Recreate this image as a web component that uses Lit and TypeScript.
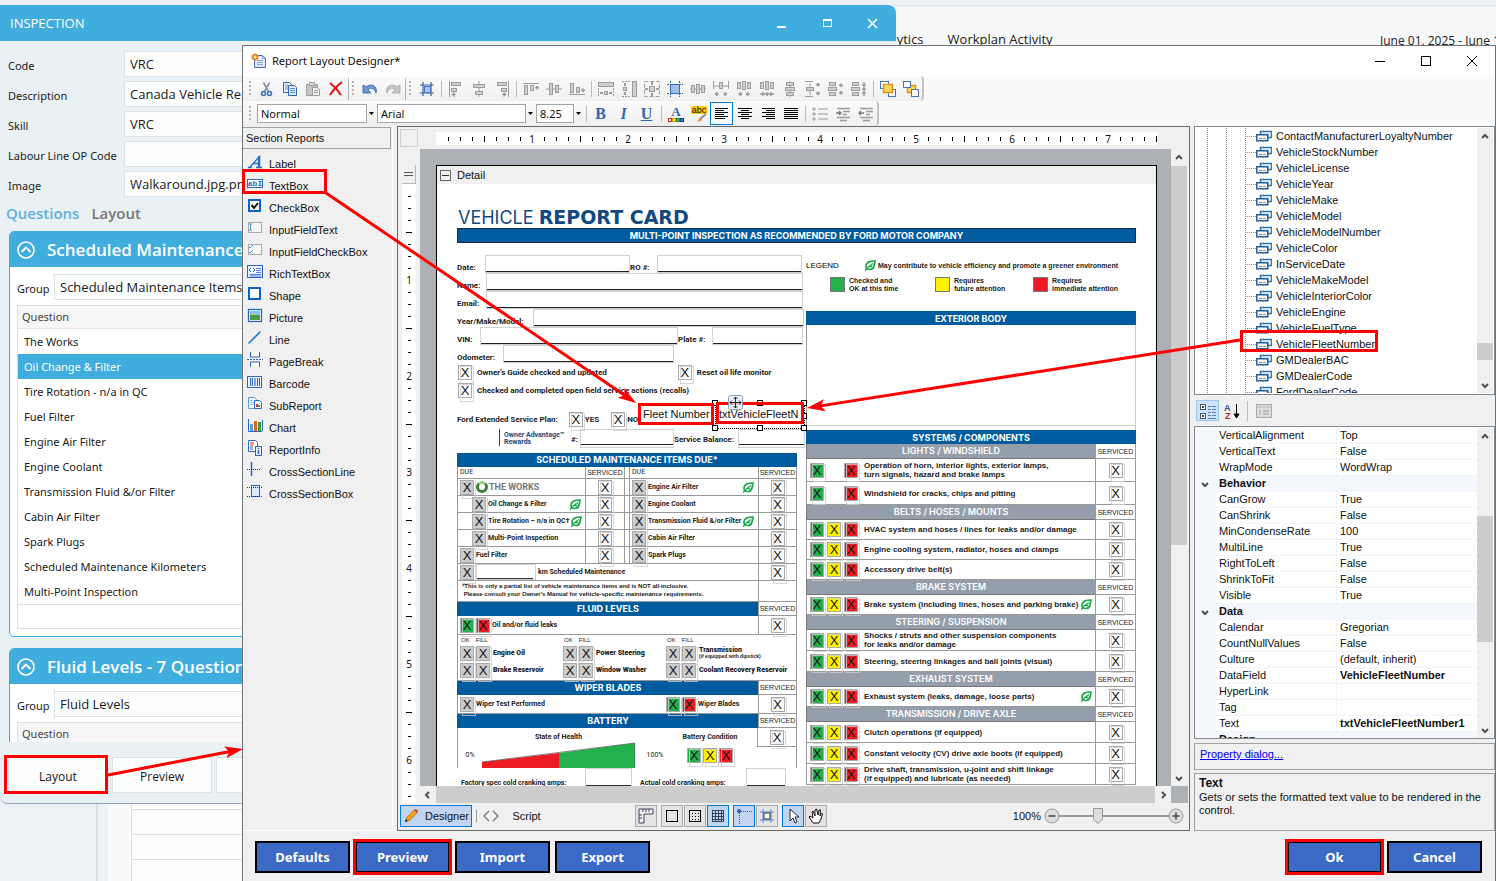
import { LitElement, html, svg, css, nothing } from "lit";
import { customElement } from "lit/decorators.js";

type Tpl = unknown;

const icon = (body: Tpl, w = 16, h = 16) =>
  html`<svg width=${w} height=${h} viewBox="0 0 ${w} ${h}" aria-hidden="true">${body}</svg>`;

/* ---------- toolbar glyphs ---------- */
const G = "#cfcfcf";
const S = "#9c9c9c";
const arrowH = (x: number, y: number, d: number) =>
  svg`<path d="M${x} ${y}h${4 * d}M${x + 4 * d} ${y}l${-2 * d} -2v4z" fill=${S} stroke=${S}/>`;
const arrowV = (x: number, y: number, d: number) =>
  svg`<path d="M${x} ${y}v${4 * d}M${x} ${y + 4 * d}l-2 ${-2 * d}h4z" fill=${S} stroke=${S}/>`;
const box = (x: number, y: number, w: number, h: number) =>
  svg`<rect x=${x + 0.5} y=${y + 0.5} width=${w - 1} height=${h - 1} fill=${G} stroke=${S}/>`;

const TB = {
  cut: svg`<path d="M4.500 1.500l5 9M10.500 1.500l-5 9" stroke="#8792a8" stroke-width="1.600" fill="none"/><circle cx="4.500" cy="12.500" r="2" fill="none" stroke="#3a6bc0" stroke-width="1.500"/><circle cx="10.500" cy="12.500" r="2" fill="none" stroke="#3a6bc0" stroke-width="1.500"/>`,
  copy: svg`<path d="M1.500 1.500h6l2 2v8h-8z" fill="#eef4ff" stroke="#2f62b5"/><path d="M6.500 4.500h6l2 2v8h-8z" fill="#e4eeff" stroke="#2f62b5"/><path d="M3 4h3M3 6h3M3 8h3M8 7.500h5M8 9.500h5M8 11.500h5" stroke="#5b8bd8"/>`,
  paste: svg`<path d="M1.500 3.500h11v11h-11z" fill="#c4c4c4" stroke=${S}/><path d="M4.500 1.500h5v3h-5z" fill="#ddd" stroke=${S}/><path d="M7.500 6.500h5l2 2v6h-7z" fill="#f2f2f2" stroke=${S}/><path d="M9 9.500h4M9 11.500h4" stroke=${S}/>`,
  del: svg`<path d="M2 2c4 3 8 7 11 12M14 1C9 5 5 9 2 14" stroke="#e60f0f" stroke-width="2" fill="none"/>`,
  undo: svg`<path d="M1 4v8h8l-3-3c3-3 6-2 8 3 2-6-4-11-10-6z" fill="#6e9ad6" stroke="#2f5fa8" stroke-width="0.800"/>`,
  redo: svg`<path d="M15 4v8H7l3-3c-3-3-6-2-8 3-2-6 4-11 10-6z" fill="#c4c4c4" stroke="#a4a4a4" stroke-width="0.800"/>`,
  snap: svg`<path d="M4 1v14M12 1v14M1 4h14M1 12h14" stroke="#35609f" stroke-width="1.200"/><rect x="5.500" y="5.500" width="6" height="6" fill="#a9c6f2" stroke="#4777be"/>`,
  left: svg`<path d="M1.500 0v16" stroke=${S}/>${box(3, 1, 10, 4)}${box(3, 7, 6, 4)}${arrowH(8, 13.5, -1)}`,
  center: svg`<path d="M8 0v16" stroke=${S}/>${box(2, 3, 12, 4)}${box(4, 10, 8, 4)}`,
  right: svg`<path d="M14.500 0v16" stroke=${S}/>${box(3, 1, 10, 4)}${box(7, 7, 6, 4)}${arrowH(8, 13.5, 1)}`,
  top: svg`<path d="M0 2.500h16" stroke=${S}/>${box(1, 4, 4, 10)}${box(7, 4, 4, 6)}${arrowV(14, 9, -1)}`,
  middle: svg`<path d="M0 8h16" stroke=${S}/>${box(3, 2, 4, 12)}${box(9, 4, 4, 8)}`,
  bottom: svg`<path d="M0 13.500h16" stroke=${S}/>${box(1, 2, 4, 10)}${box(7, 6, 4, 6)}${arrowV(14, 7, 1)}`,
  width: svg`${box(0, 1, 16, 5)}<path d="M.5 7v8M15.500 7v8" stroke=${S} stroke-dasharray="2 1"/>${box(6, 10, 4, 4)}<path d="M5 12H2M11 12h3" stroke=${S} stroke-width="2"/>`,
  height: svg`${box(11, 0, 5, 16)}<path d="M1 .5h8M1 15.500h8" stroke=${S} stroke-dasharray="2 1"/>${box(2, 6, 4, 4)}<path d="M4 5V2M4 11v3" stroke=${S} stroke-width="2"/>`,
  both: svg`<rect x=".5" y=".5" width="15" height="15" fill="none" stroke=${S} stroke-dasharray="4 2"/>${box(5, 5, 6, 6)}<path d="M8 1v3M8 12v3M1 8h3M12 8h3" stroke=${S} stroke-width="2"/>`,
  sizeGrid: svg`<path d="M3.500 0v16M12.500 0v16M0 3.500h16M0 12.500h16" stroke="#2f5f9f" stroke-dasharray="2 1"/><rect x="3.500" y="3.500" width="9" height="9" fill="#9fc0ef" stroke="#3a6cb4"/>`,
  h1: svg`<path d="M0 8h16" stroke=${S}/>${box(1, 4, 4, 8)}${box(6, 3, 4, 10)}${box(11, 4, 4, 8)}`,
  h2: svg`<path d="M.5 0v8M15.500 0v8M5 5h6" stroke=${S}/>${box(6, 1, 4, 7)}<path d="M1 5h4M11 5h4" stroke=${S}/>${arrowH(6, 13, -1)}${arrowH(10, 13, 1)}`,
  h3: svg`${box(1, 1, 4, 7)}${box(6, 0, 4, 9)}${box(11, 1, 4, 7)}${arrowH(2, 13, 1)}${arrowH(14, 13, -1)}`,
  h4: svg`${box(1, 1, 4, 7)}${box(6, 0, 4, 9)}${box(11, 1, 4, 7)}<path d="M1 13h14M4 11v4M8 11v4M12 11v4" stroke=${S} stroke-width="1.500"/>`,
  v1: svg`<path d="M8 0v16" stroke=${S}/>${box(4, 1, 8, 4)}${box(3, 6, 10, 4)}${box(4, 11, 8, 4)}`,
  v2: svg`<path d="M0 .5h8M0 15.500h8M5 2v12" stroke=${S}/>${box(1, 6, 8, 4)}${arrowV(13, 6, -1)}${arrowV(13, 10, 1)}`,
  v3: svg`${box(1, 1, 7, 4)}${box(0, 6, 9, 4)}${box(1, 11, 7, 4)}${arrowV(13, 2, 1)}${arrowV(13, 14, -1)}`,
  v4: svg`${box(1, 1, 7, 4)}${box(0, 6, 9, 4)}${box(1, 11, 7, 4)}<path d="M13 1v14M11 4h4M11 8h4M11 12h4" stroke=${S} stroke-width="1.500"/>`,
  front: svg`<rect x=".5" y=".5" width="8" height="7" fill="#fff" stroke="#4a72b8"/><rect x="8.500" y="8.500" width="7" height="7" fill="#fff" stroke="#4a72b8"/><rect x="3.500" y="3.500" width="9" height="8" fill="#ffd85a" stroke="#e38b12" stroke-width="1.400"/>`,
  back: svg`<rect x="4.500" y="4.500" width="8" height="7" fill="#ffd85a" stroke="#e38b12" stroke-width="1.400"/><rect x=".5" y=".5" width="7" height="6" fill="#fff" stroke="#4a72b8"/><rect x="8.500" y="8.500" width="7" height="7" fill="#fff" stroke="#4a72b8"/>`,
  fore: svg`<text x="8" y="10" text-anchor="middle" font-family="Liberation Serif" font-size="13" font-weight="700" fill="#2f64b4">A</text><rect x=".5" y="12.500" width="3" height="3" fill="#fff" stroke="#d22"/><rect x="4.500" y="12.500" width="3" height="3" fill="#ffe04a" stroke="#d90"/><rect x="8.500" y="12.500" width="3" height="3" fill="#4c4" stroke="#181"/><rect x="12.500" y="12.500" width="3" height="3" fill="#58f" stroke="#139"/>`,
  mark: svg`<rect width="16" height="8" rx="1" fill="#ffc60a"/><text x="8" y="7" text-anchor="middle" font-family="Liberation Sans" font-size="9" fill="#111">abc</text><path d="M15 8l-6 5" stroke="#8a8f98" stroke-width="2"/><path d="M9 12l-3 4 5-2z" fill="#f27a1a"/>`,
  bullets: svg`<path d="M6 3h10M6 8h10M6 13h10" stroke=${S}/><path d="M1 2h2v2H1zM1 7h2v2H1zM1 12h2v2H1z" fill="none" stroke=${S}/>`,
  indent: svg`<path d="M2 2.500h13M8 5.500h7M8 8.500h4M2 11.500h13M5 14.500h7" stroke=${S} stroke-width="1.500"/><path d="M1 7h5M4 5l2 2-2 2" stroke="#777" fill="none" stroke-width="1.300"/>`,
  outdent: svg`<path d="M2 2.500h13M8 5.500h7M8 8.500h4M2 11.500h13M5 14.500h7" stroke=${S} stroke-width="1.500"/><path d="M6 7H1M3 5L1 7l2 2" stroke="#777" fill="none" stroke-width="1.300"/>`,
};
const lines = (w: number[], mode: "l" | "c" | "r") =>
  icon(w.map((n, i) => {
    const x = mode === "l" ? 1 : mode === "c" ? 8 - n / 2 : 15 - n;
    return svg`<rect x=${x} y=${2 + i * 2} width=${n} height="1" fill="#000"/>`;
  }));

/* ---------- toolbox glyphs ---------- */
const B = "#2a67c4";
const TOOLS: [string, Tpl][] = [
  ["Label", svg`<path d="M1 13.500h4M9 13.500h6M3 13L12.500 2.500V13M6 9.500h6" stroke="#2b6fc2" stroke-width="1.400" fill="none"/><path d="M12 2v11" stroke="#2b6fc2" stroke-width="2.200"/>`],
  ["TextBox", svg`<rect x=".5" y="3.500" width="15" height="8" fill="#fff" stroke=${B}/><text x="8" y="10" text-anchor="middle" font-family="Liberation Mono" font-size="8" font-weight="700" fill=${B}>abI</text>`],
  ["CheckBox", svg`<rect x="2" y="2" width="11" height="11" fill="#fff" stroke="#0a63c9" stroke-width="2"/><path d="M4.500 7l2.500 3 4-5" stroke="#111" stroke-width="2" fill="none"/>`],
  ["InputFieldText", svg`<rect x="1.500" y="2.500" width="13" height="10" fill="#f6f6f6" stroke="#aaa"/><path d="M3.500 4v6M2 4h3M2 10h3" stroke="#3aa0d8"/>`],
  ["InputFieldCheckBox", svg`<rect x="1.500" y="2.500" width="13" height="10" fill="#f6f6f6" stroke="#aaa"/><path d="M2 5l1 1 3-3M2 10l1 1 3-3" stroke="#3aa0d8" fill="none"/>`],
  ["RichTextBox", svg`<rect x=".5" y="1.500" width="15" height="12" fill="#eaf2ff" stroke=${B}/><path d="M4 4L2 6l2 2M6 4l2 2-2 2" stroke=${B} fill="none"/><path d="M9 4.500h5M9 6.500h5M9 8.500h5M3 10.500h11M3 12h11" stroke=${B} stroke-width=".8"/>`],
  ["Shape", svg`<rect x="2" y="2" width="11" height="11" fill="#fff" stroke="#0a63c9" stroke-width="2"/>`],
  ["Picture", svg`<rect x="1.500" y="1.500" width="13" height="12" fill="#fff" stroke=${B} stroke-width="1.300"/><path d="M3 3h10v4H3z" fill="#7ec4f5"/><path d="M3 7h10v5H3z" fill="#4f9a4a"/><path d="M4 7l3-2 2 2z" fill="#f2c640"/>`],
  ["Line", svg`<path d="M1.500 13.500l12-12" stroke="#1c7dc9" stroke-width="1.600"/>`],
  ["PageBreak", svg`<path d="M3.500 0v5h9V0" fill="#fff" stroke=${B}/><path d="M3.500 15v-5h9v5" fill="#fff" stroke=${B}/><path d="M0 7.500h16" stroke=${B} stroke-dasharray="2 1"/>`],
  ["Barcode", svg`<rect x=".5" y="2.500" width="14" height="11" fill="#fff" stroke=${B}/><path d="M3.500 4v8M5.500 4v8M8 4v8M10.500 4v8M12.500 4v8" stroke=${B} stroke-width="1.200"/>`],
  ["SubReport", svg`<path d="M1.500 1.500h6l2 2v9h-8z" fill="#fff" stroke="#5a9bd8"/><path d="M3 4.500h3M3 6.500h5M3 8.500h5" stroke="#8cc"/><path d="M7.500 4.500h5l2 2v6h-7z" fill="#fff" stroke=${B}/><path d="M9 8h2v3H9z" fill="#d33"/><path d="M11 9h2v2h-2z" fill="#3a3"/>`],
  ["Chart", svg`<path d="M1.500 1v12.500H15M15.500 2v11" fill="none" stroke=${B}/><path d="M3 6h3v7H3z" fill="#5ac"/><path d="M7 3h3v10H7z" fill="#e0661c"/><path d="M11 4h3v9h-3z" fill="#3a9a3a"/>`],
  ["ReportInfo", svg`<path d="M1.500 .5h7l2 2v9h-9z" fill="#fff" stroke=${B}/><path d="M3 3h4M3 5h3" stroke="#d33"/><path d="M3 7h3M3 9h3" stroke=${B}/><rect x="8.500" y="6.500" width="6" height="9" fill="#eef4ff" stroke=${B}/><path d="M11.500 8v1M11.500 10v4" stroke=${B} stroke-width="1.500"/>`],
  ["CrossSectionLine", svg`<path d="M4.500 0v14" stroke=${B} stroke-width="1.500"/><path d="M0 7.500h14" stroke="#333" stroke-dasharray="1 1"/>`],
  ["CrossSectionBox", svg`<rect x="4.500" y="1.500" width="8" height="11" fill="#dbe9fb" stroke=${B}/><path d="M0 3.500h16M0 12.500h16" stroke="#333" stroke-dasharray="1 1"/>`],
];

const leaf = html`<svg class="leaf" width="11" height="11" viewBox="0 0 11 11" aria-hidden="true"><path d="M10 1C5 1 1 2 1 6.500 1 9 3 9.500 5 9.500 9 9.500 9.500 5 10 1z" fill="#fff" stroke="#1fa84f" stroke-width="1.700"/><path d="M0 11C2 8 5 5 8 3.500M4 6.500h3" stroke="#1fa84f" stroke-width="1.300" fill="none"/></svg>`;

const chev = (d: "up" | "down" | "left" | "right") => {
  const p = { up: "M2 6l3-3 3 3", down: "M2 4l3 3 3-3", left: "M6 2L3 5l3 3", right: "M4 2l3 3-3 3" }[d];
  return icon(svg`<path d=${p} fill="none" stroke="#505050" stroke-width="2"/>`, 10, 10);
};

const scrollbar = (dir: "v" | "h", before: number, thumb: number, after: number) => html`
  <div class="sb ${dir}">
    <span class="sb-arrow">${chev(dir === "v" ? "up" : "left")}</span>
    <span style="flex:${before}"></span>
    <span class="thumb" style="flex:${thumb}"></span>
    <span style="flex:${after}"></span>
    <span class="sb-arrow">${chev(dir === "v" ? "down" : "right")}</span>
  </div>`;

const X = (kind = "") => html`<span class="x ${kind}">X</span>`;

const QUESTIONS = ["The Works", "Oil Change & Filter", "Tire Rotation - n/a in QC", "Fuel Filter", "Engine Air Filter", "Engine Coolant", "Transmission Fluid &/or Filter", "Cabin Air Filter", "Spark Plugs", "Scheduled Maintenance Kilometers", "Multi-Point Inspection"];

const TREE = ["ContactManufacturerLoyaltyNumber", "VehicleStockNumber", "VehicleLicense", "VehicleYear", "VehicleMake", "VehicleModel", "VehicleModelNumber", "VehicleColor", "InServiceDate", "VehicleMakeModel", "VehicleInteriorColor", "VehicleEngine", "VehicleFuelType", "VehicleFleetNumber", "GMDealerBAC", "GMDealerCode", "FordDealerCode"];

const PROPS: [string, string?, boolean?][] = [
  ["VerticalAlignment", "Top"], ["VerticalText", "False"], ["WrapMode", "WordWrap"],
  ["Behavior"],
  ["CanGrow", "True"], ["CanShrink", "False"], ["MinCondenseRate", "100"], ["MultiLine", "True"], ["RightToLeft", "False"], ["ShrinkToFit", "False"], ["Visible", "True"],
  ["Data"],
  ["Calendar", "Gregorian"], ["CountNullValues", "False"], ["Culture", "(default, inherit)"], ["DataField", "VehicleFleetNumber", true], ["HyperLink", ""], ["Tag", ""], ["Text", "txtVehicleFleetNumber1", true],
  ["Design"],
];

interface SysRow { text: string; two?: string; noYellow?: boolean; leaf?: boolean; }
const SYSTEMS: { name: string; size: string; rows: SysRow[] }[] = [
  { name: "LIGHTS / WINDSHIELD", size: "tall", rows: [
    { text: "Operation of horn, interior lights, exterior lamps,", two: "turn signals, hazard and brake lamps", noYellow: true },
    { text: "Windshield for cracks, chips and pitting", noYellow: true }] },
  { name: "BELTS / HOSES / MOUNTS", size: "low", rows: [
    { text: "HVAC system and hoses / lines for leaks and/or damage" },
    { text: "Engine cooling system, radiator, hoses and clamps" },
    { text: "Accessory drive belt(s)" }] },
  { name: "BRAKE SYSTEM", size: "low", rows: [{ text: "Brake system (including lines, hoses and parking brake)", leaf: true }] },
  { name: "STEERING / SUSPENSION", size: "mid", rows: [
    { text: "Shocks / struts and other suspension components", two: "for leaks and/or damage" },
    { text: "Steering, steering linkages and ball joints (visual)" }] },
  { name: "EXHAUST SYSTEM", size: "low", rows: [{ text: "Exhaust system (leaks, damage, loose parts)", leaf: true }] },
  { name: "TRANSMISSION / DRIVE AXLE", size: "mid", rows: [
    { text: "Clutch operations (if equipped)" },
    { text: "Constant velocity (CV) drive axle boots (if equipped)" },
    { text: "Drive shaft, transmission, u-joint and shift linkage", two: "(if equipped) and lubricate (as needed)" }] },
];

const SCHED: { l: Tpl; r: string; sub?: boolean; lLeaf?: boolean; rLeaf?: boolean }[] = [
  { l: html`<span class="works"><i></i>THE WORKS</span>`, r: "Engine Air Filter", rLeaf: true },
  { l: "Oil Change & Filter", r: "Engine Coolant", sub: true, lLeaf: true },
  { l: "Tire Rotation – n/a in QC†", r: "Transmission Fluid &/or Filter", sub: true, lLeaf: true, rLeaf: true },
  { l: "Multi-Point Inspection", r: "Cabin Air Filter", sub: true },
  { l: "Fuel Filter", r: "Spark Plugs" },
];

const base = css`
  * { box-sizing: border-box; }
  svg { display: block; flex: none; }
  button, input, select { font: inherit; color: inherit; margin: 0; padding: 0; border: 0; background: none; border-radius: 0; }
  button { display: flex; align-items: center; justify-content: center; }
  table { border-collapse: separate; border-spacing: 0; table-layout: fixed; width: 100%; }
  td, th { padding: 0; font-weight: inherit; text-align: left; white-space: nowrap; overflow: hidden; }
`;
const bars = css`
  .sb { display: flex; background: #f0f0f0; flex: none; }
  .sb.v { flex-direction: column; width: 16px; }
  .sb.h { height: 17px; }
  .sb-arrow { width: 16px; height: 17px; display: flex; align-items: center; justify-content: center; flex: none; }
  .thumb { background: #cdcdcd; }
`;

/* ---------- Inspection window ---------- */
@customElement("inspection-window")
export class InspectionWindow extends LitElement {
  static styles = [base, css`
    :host { display: flex; flex-direction: column; background: #eaf1f5; font: 11px/16px "Noto Sans", sans-serif; color: #1a1a1a; border-radius: 0 8px 8px 8px; border-bottom: 1px solid #8fa3b8; overflow: hidden; }
    header { height: 36px; background: #40addf; color: #fff; display: flex; align-items: center; padding: 0 16px 0 10px; font-family: "Open Sans", sans-serif; font-size: 13px; flex: none; }
    header span { flex: 1; }
    header button { width: 46px; height: 36px; }
    header button:last-child { width: 16px; margin-left: 14px; }
    .form { display: grid; grid-template-columns: 112px 1fr; grid-auto-rows: 26px; gap: 4px; padding: 10px 8px 0; }
    .form label { line-height: 30px; height: 26px; white-space: nowrap; }
    input { height: 26px; background: #fcfdfd; border: 1px solid #dbe2e6; padding: 0 5px; min-width: 0; font-family: "Open Sans", sans-serif; font-size: 13px; }
    nav { display: flex; gap: 12px; padding: 4px 6px 6px; font: 600 15px/24px "Open Sans", sans-serif; height: 34px; }
    nav button:first-child { color: #5fb0e0; }
    nav button { color: #777; }
    .list { flex: 1; min-height: 0; overflow: hidden; padding: 0 9px; display: flex; flex-direction: column; gap: 11px; }
    section { border: 1px solid #40addf; border-radius: 5px; background: #fff; flex: none; overflow: hidden; }
    h2 { margin: 0; height: 35px; background: #40addf; color: #fff; font: 600 17px/35px "Open Sans", sans-serif; display: flex; align-items: center; gap: 11px; padding-left: 6px; white-space: nowrap; }
    .group { display: grid; grid-template-columns: 36px 1fr; grid-auto-rows: 26px; padding: 7px 8px 5px 7px; line-height: 26px; gap: 1px; }
    .group label { line-height: 30px; height: 26px; }
    .tbl { margin: 0 7px 7px; border: 1px solid #dedede; }
    th { height: 23px; background: #f6f6f6; color: #444; padding-left: 4px; border-bottom: 1px solid #e4e4e4; }
    td { height: 25px; padding-left: 6px; }
    tr.sel td { background: #40addf; color: #fff; }
    tr.empty td { border-top: 1px solid #dedede; height: 24px; }
    footer { height: 61px; flex: none; display: flex; gap: 4px; padding: 15px 8px 10px; }
    footer button { width: 100px; background: #fcfdfd; border: 1px solid #dbe2e6; padding-top: 3px; font: 12px/16px "Open Sans", sans-serif; }
  `];
  private section(title: string, group: string, rows: string[]) {
    return html`<section>
      <h2>${icon(svg`<circle cx="10" cy="10" r="8" fill="none" stroke="#fff" stroke-width="1.600"/><path d="M5.500 12L10 7.500l4.500 4.500" fill="none" stroke="#fff" stroke-width="1.800"/>`, 20, 20)}${title}</h2>
      <div class="group"><label for="g-${group}">Group</label><input id="g-${group}" .value=${group}></div>
      <div class="tbl"><table>
        <thead><tr><th>Question</th></tr></thead>
        <tbody>${rows.map((r, i) => html`<tr class=${i === 1 ? "sel" : ""}><td>${r}</td></tr>`)}<tr class="empty"><td></td></tr></tbody>
      </table></div>
    </section>`;
  }
  render() {
    const fields = [["Code", "VRC"], ["Description", "Canada Vehicle Report Card"], ["Skill", "VRC"], ["Labour Line OP Code", ""], ["Image", "Walkaround.jpg.png"]];
    return html`
      <header><span>INSPECTION</span>
        <button aria-label="Minimize">${icon(svg`<path d="M1 9h9" stroke="#fff" stroke-width="2"/>`, 11, 11)}</button>
        <button aria-label="Maximize">${icon(svg`<rect x="1.500" y="1.500" width="8" height="7" fill="none" stroke="#fff"/><path d="M1 2h9" stroke="#fff" stroke-width="2"/>`, 11, 11)}</button>
        <button aria-label="Close">${icon(svg`<path d="M1 1l9 9M10 1l-9 9" stroke="#fff" stroke-width="1.500"/>`, 11, 11)}</button>
      </header>
      <div class="form">${fields.map(([l, v]) => html`<label for="f-${l}">${l}</label><input id="f-${l}" .value=${v}>`)}</div>
      <nav><button>Questions</button><button>Layout</button></nav>
      <div class="list">
        ${this.section("Scheduled Maintenance", "Scheduled Maintenance Items Due", QUESTIONS)}
        ${this.section("Fluid Levels - 7 Questions", "Fluid Levels", ["Oil and/or fluid leaks"])}
      </div>
      <footer><button>Layout</button><button>Preview</button><button></button></footer>`;
  }
}

/* ---------- Report card on the design surface ---------- */
@customElement("report-card")
export class ReportCard extends LitElement {
  static styles = [base, css`
    :host { display: block; position: relative; background: #fff; color: #222; padding: 0 20px; font: 700 8px/9px "Liberation Sans", sans-serif; }
    h1 { margin: 0; height: 44px; padding: 22px 1px 0; font: 400 18px/22px Inter, sans-serif; color: #124a80; white-space: nowrap; }
    h1 b { font: 700 19px/22px "DejaVu Sans", sans-serif; }
    .banner { height: 15px; background: #005b9f; border: 1px solid #1d2733; color: #fff; font: 700 9px/14px Inter, sans-serif; text-align: center; }
    .cols { display: grid; grid-template-columns: 340px 1fr; gap: 9px; }
    .bar { background: #005b9f; color: #fff; height: 14px; font: 700 9px/15px Inter, sans-serif; text-align: center; }
    .left { padding-top: 12px; font-family: Roboto, sans-serif; }
    .row { display: grid; height: 18px; align-items: center; white-space: nowrap; width: 348px; }
    .row label { padding-top: 6px; }
    .row input { width: 100%; height: 18px; border: 1px solid #d0d0d0; background: linear-gradient(#222, #222) 0 15px / 100% 1px no-repeat; }
    .date { grid-template-columns: 28px 145px 27px 145px; }
    .name { grid-template-columns: 29px 317px; }
    .year { grid-template-columns: 76px 271px; }
    .vin { grid-template-columns: 23px 198px 34px 91px; }
    .odo { grid-template-columns: 46px 171px; }
    .chk { display: flex; height: 18px; align-items: center; gap: 5px; padding-left: 1px; white-space: nowrap; }
    .chk .second { margin-left: 66px; }
    .plan { display: flex; align-items: center; gap: 2px; height: 20px; margin-top: 10px; white-space: nowrap; }
    .plan > .x { margin-left: 9px; }
    .plan .no { margin-left: 10px; display: flex; align-items: center; gap: 2px; }
    .rewards { display: flex; height: 24px; padding-left: 42px; white-space: nowrap; width: 348px; }
    .rewards .logo { border-left: 1px solid #124a80; padding: 3px 0 0 4px; height: 17px; font-size: 7px; line-height: 7px; color: #124a80; width: 72px; }
    .rewards input { width: 94px; height: 19px; border: 1px solid #d0d0d0; background: linear-gradient(#222, #222) 0 14px / 100% 1px no-repeat; }
    .rewards label { padding-top: 6px; }
    .rewards input:last-child { width: auto; flex: 1; min-width: 0; margin-left: 4px; }
    .x { position: relative; display: inline-flex; align-items: center; justify-content: center; width: 14px; height: 15px; border: 1px solid #aaa; font: 400 13px/13px "Liberation Sans", sans-serif; color: #111; flex: none; vertical-align: middle; overflow: visible; }
    .x::after { content: ""; position: absolute; left: 1px; top: 0; width: 12px; height: 16px; border: 1px solid #ccc; opacity: .8; }
    .x.g { background: #22b14c; } .x.y { background: #fff200; } .x.r { background: #ed1c24; } .x.k { background: #ccc; }
    table.grid td, table.grid th { border-bottom: 1px solid #999; border-left: 1px solid #999; vertical-align: middle; overflow: visible; }
    table.grid tr > :last-child { border-right: 1px solid #999; }
    th.sv, td.sv { text-align: center; font: 400 7px/9px "Liberation Sans", sans-serif; }
    table.grid th.cap { background: #005b9f; color: #fff; font: 700 9px/13px Inter, sans-serif; text-align: center; border-color: #005b9f; height: 14px; }
    table.grid th.sub { background: #949fab; color: #fff; font: 600 9px/14px Inter, sans-serif; text-align: center; border-color: #777; height: 15px; }
    .tall td { height: 23px; } .low td { height: 20px; } .mid td { height: 21px; }
    .sys { display: flex; align-items: center; padding-left: 3px; line-height: 9px; }
    .sys .x { margin-right: 3px; }
    .sys .gap { width: 17px; }
    .sys .txt { padding-left: 3px; flex: 1; }
    .leaf { display: inline-block; vertical-align: middle; }
    .sys .leaf { margin-right: 3px; }
    .sched { font-size: 7px; }
    .sched td { height: 17px; }
    .sched .mid td { height: 19px; }
    .sched tr.h td { height: 12px; font-weight: 400; padding-left: 2px; }
    .sched tr.h td.sv { padding: 0; }
    .cell { display: flex; align-items: center; gap: 2px; padding-left: 2px; }
    .cell.sub { padding-left: 14px; }
    .cell .leaf { margin-left: auto; margin-right: 4px; }
    .cell.wb { display: grid; grid-template-columns: 14px 188px 14px 14px 1fr; }
    .works { display: flex; align-items: center; gap: 1px; font-size: 9px; color: #777; }
    .works i { width: 12px; height: 12px; border-radius: 50%; border: 3px solid #3c7f3a; border-top-color: #9fd08f; background: #fff; }
    .km { display: flex; align-items: center; gap: 2px; padding-left: 2px; }
    .km input { width: 60px; height: 16px; border: 1px solid #d0d0d0; background: linear-gradient(#333, #333) 0 13px / 56px 1px no-repeat; }
    .note { padding: 1px 4px; font: 700 6px/8px "Liberation Sans", sans-serif; height: 20px; white-space: pre; }
    .levels { display: grid; grid-template-columns: repeat(3, 103px); padding: 2px 0 0 2px; height: 45px; align-content: start; row-gap: 1px; }
    .levels small { font: 400 6px/7px "Liberation Sans", sans-serif; display: flex; gap: 6px; padding-left: 1px; }
    .lv { display: flex; gap: 2px; align-items: center; height: 16px; }
    .lv b { padding-left: 1px; line-height: 7px; }
    .lv em { display: block; font: 700 5px/5px "Liberation Sans", sans-serif; }
    .batt { display: grid; grid-template-columns: 24px 153px 40px 70px; align-items: center; padding-top: 5px; white-space: nowrap; text-align: center; font-size: 7px; }
    .batt .pct { font-weight: 400; }
    .trio { display: flex; gap: 2px; justify-content: center; }
    .amps { display: grid; grid-template-columns: 124px 47px 8px 106px 40px; padding-left: 4px; align-items: end; font-size: 7px; white-space: nowrap; }
    .amps input { height: 20px; width: 100%; border: 1px solid #d0d0d0; background: linear-gradient(#333, #333) 0 16px / 100% 1px no-repeat; }
    .bwrap { display: grid; grid-template-columns: 1fr 39px; border-left: 1px solid #999; border-right: 1px solid #999; }
    .bwrap .svc { border-left: 1px solid #999; border-bottom: 1px solid #999; height: 19px; display: flex; align-items: center; justify-content: center; }
    .legend { display: flex; align-items: center; gap: 2px; height: 12px; margin-top: 16px; font-size: 7px; white-space: nowrap; }
    .legend strong { width: 57px; font-size: 8px; font-weight: 400; color: #000; }
    .keys { display: grid; grid-template-columns: 105px 98px 1fr; padding: 6px 0 0 24px; height: 40px; }
    .keys div { display: flex; gap: 4px; font-size: 7px; line-height: 8px; white-space: nowrap; }
    .keys i { width: 15px; height: 15px; border: 1px solid #777; }
    i.g { background: #22b14c; } i.y { background: #fff200; } i.r { background: #ed1c24; }
    .ext { height: 105px; border-left: 1px solid #999; border-right: 1px solid #ccc; padding-bottom: 4px; }
    .ext div { height: 101px; border-bottom: 1px solid #ccc; }
    .placed { position: absolute; top: 222px; height: 16px; font: 400 11px/16px "Liberation Sans", sans-serif; color: #111; white-space: nowrap; overflow: hidden; background: #fff; }
    .fleet { left: 206px; width: 70px; }
    .bound { left: 282px; width: 81px; }
  `];
  private field(cls: string, ...pairs: string[]) {
    return html`<div class="row ${cls}">${pairs.map((p) => html`<label for="c-${p}">${p}</label><input id="c-${p}">`)}</div>`;
  }
  render() {
    const lv = (t: Tpl) => html`<span class="lv">${X("k")}${X("k")}<b>${t}</b></span>`;
    return html`
      <h1>VEHICLE <b>REPORT CARD</b></h1>
      <div class="banner">MULTI-POINT INSPECTION AS RECOMMENDED BY FORD MOTOR COMPANY</div>
      <div class="cols">
        <div class="left">
          ${this.field("date", "Date:", "RO #:")}
          ${this.field("name", "Name:")}
          ${this.field("name", "Email:")}
          ${this.field("year", "Year/Make/Model:")}
          ${this.field("vin", "VIN:", "Plate #:")}
          ${this.field("odo", "Odometer:")}
          <div class="chk">${X()}<span>Owner's Guide checked and updated</span><span class="second">${X()}</span><span>Reset oil life monitor</span></div>
          <div class="chk">${X()}<span>Checked and completed open field service actions (recalls)</span></div>
          <div class="plan">Ford Extended Service Plan: ${X()}<span>YES</span><span class="no">${X()}<span>NO</span></span></div>
          <div class="rewards"><span class="logo">Owner Advantage™<br>Rewards</span><label for="c-rw">#:&nbsp;</label><input id="c-rw"><label for="c-sb">Service Balance:</label><input id="c-sb"></div>
          <table class="grid sched">
            <colgroup><col style="width:128px"><col style="width:39px"><col style="width:5px"><col style="width:129px"><col style="width:39px"></colgroup>
            <tr><th class="cap" colspan="5">SCHEDULED MAINTENANCE ITEMS DUE*</th></tr>
            <tr class="h"><td>DUE</td><td class="sv">SERVICED</td><td></td><td>DUE</td><td class="sv">SERVICED</td></tr>
            ${SCHED.map((s) => html`<tr>
              <td><div class="cell ${s.sub ? "sub" : ""}">${X("k")}<span>${s.l}</span>${s.lLeaf ? leaf : nothing}</div></td>
              <td class="sv">${X()}</td><td></td>
              <td><div class="cell">${X("k")}<span>${s.r}</span>${s.rLeaf ? leaf : nothing}</div></td>
              <td class="sv">${X()}</td></tr>`)}
            <tr><td colspan="4"><div class="km">${X("k")}<input aria-label="Kilometers">km Scheduled Maintenance</div></td><td class="sv">${X()}</td></tr>
            <tr><td colspan="4"><div class="note">*This is only a partial list of vehicle maintenance items and is NOT all-inclusive.
 Please consult your Owner's Manual for vehicle-specific maintenance requirements.</div></td><td></td></tr>
            <tr><th class="cap" colspan="4">FLUID LEVELS</th><th class="sv">SERVICED</th></tr>
            <tr class="mid"><td colspan="4"><div class="cell">${X("g")}${X("r")}<span>Oil and/or fluid leaks</span></div></td><td class="sv">${X()}</td></tr>
            <tr><td colspan="5"><div class="levels">
              ${[0, 1, 2].map(() => html`<small><span>OK</span><span>FILL</span></small>`)}
              ${lv("Engine Oil")}${lv("Power Steering")}${lv(html`Transmission<em>(if equipped with dipstick)</em>`)}
              ${lv("Brake Reservoir")}${lv("Window Washer")}${lv("Coolant Recovery Reservoir")}
            </div></td></tr>
            <tr><th class="cap" colspan="4">WIPER BLADES</th><th class="sv">SERVICED</th></tr>
            <tr class="mid"><td colspan="4"><div class="cell wb">${X("k")}<span>Wiper Test Performed</span>${X("g")}${X("r")}<span>Wiper Blades</span></div></td><td class="sv">${X()}</td></tr>
            <tr><th class="cap" colspan="4">BATTERY</th><th class="sv">SERVICED</th></tr>
          </table>
          <div class="bwrap">
            <div class="batt">
              <span></span><span>State of Health</span><span></span><span>Battery Condition</span>
              <span class="pct">0%</span>
              <svg width="153" height="26" viewBox="0 0 153 26"><path d="M0 20L77 11v15H0z" fill="#ed1c24"/><path d="M77 11L153 1v25H77z" fill="#22b14c"/><path d="M0 20L153 1v25" fill="none" stroke="#555" stroke-width=".7"/></svg>
              <span class="pct">100%</span>
              <span class="trio">${X("g")}${X("y")}${X("r")}</span>
            </div>
            <div><div class="svc">${X()}</div></div>
          </div>
          <div class="amps"><label for="c-fa">Factory spec cold cranking amps:</label><input id="c-fa"><span></span><label for="c-aa">Actual cold cranking amps:</label><input id="c-aa"></div>
        </div>
        <div class="right">
          <div class="legend"><strong>LEGEND</strong>${leaf}<span>May contribute to vehicle efficiency and promote a greener environment</span></div>
          <div class="keys">
            <div><i class="g"></i><span>Checked and<br>OK at this time</span></div>
            <div><i class="y"></i><span>Requires<br>future attention</span></div>
            <div><i class="r"></i><span>Requires<br>immediate attention</span></div>
          </div>
          <div class="bar">EXTERIOR BODY</div>
          <div class="ext"><div></div></div>
          <div class="bar">SYSTEMS / COMPONENTS</div>
          <table class="grid">
            <colgroup><col><col style="width:41px"></colgroup>
            ${SYSTEMS.map((g) => html`<tr><th class="sub">${g.name}</th><th class="sv">SERVICED</th></tr>
              ${g.rows.map((r) => html`<tr class=${g.size}><td><div class="sys">${X("g")}${r.noYellow ? html`<span class="gap"></span>` : X("y")}${X("r")}<span class="txt">${r.text}${r.two ? html`<br>${r.two}` : nothing}</span>${r.leaf ? leaf : nothing}</div></td><td class="sv">${X()}</td></tr>`)}`)}
          </table>
        </div>
      </div>
      <span class="placed fleet">Fleet Number</span>
      <span class="placed bound">txtVehicleFleetN</span>`;
  }
}

/* ---------- Report designer window ---------- */
@customElement("designer-window")
export class DesignerWindow extends LitElement {
  static styles = [base, bars, css`
    :host { display: flex; flex-direction: column; background: #f0f0f0; border: 1px solid #6e7378; border-bottom: 0; font: 11px/14px "Liberation Sans", sans-serif; color: #111; overflow: hidden; isolation: isolate; }
    header { height: 30px; background: #fff; display: flex; align-items: center; padding-left: 8px; font: 11px/16px "Noto Sans", sans-serif; flex: none; }
    header span { flex: 1; padding-left: 5px; }
    header button { width: 46px; height: 30px; }
    .bars { background: #fafafa; flex: none; height: 50px; }
    .strip { display: flex; align-items: center; height: 25px; width: max-content; background: linear-gradient(#fbfbfb, #efefef); border-right: 2px solid #c4c4c4; border-radius: 0 4px 4px 0; }
    .grip { width: 2px; height: 15px; margin: 0 4px 0 6px; background: repeating-linear-gradient(#b4b4b4 0 2px, transparent 2px 4px); }
    .edge + .grip { margin-left: 2px; }
    .strip button { width: 23px; height: 23px; }
    .strip button.on { border: 1px solid #0078d7; background: #f5fafe; }
    .vr { width: 6px; height: 16px; background: linear-gradient(#bcbcbc, #bcbcbc) 3px 0 / 1px 100% no-repeat; }
    .edge { width: 1px; height: 22px; background: #b4b4b4; margin: 0 1px; }
    .combos { display: flex; gap: 3px; padding: 0 2px; }
    .combo { display: flex; align-items: center; gap: 2px; }
    select { appearance: none; height: 19px; border: 1px solid #a5a5a5; background: #fff; padding: 0 3px; font: 11px/16px "Noto Sans", sans-serif; }
    .w1 { width: 110px; } .w2 { width: 149px; } .w3 { width: 38px; }
    .biu { font: 700 16px/20px "Liberation Serif", serif; color: #3465b0; }
    .biu.i { font-style: italic; } .biu.u { text-decoration: underline; }
    .main { flex: 1; min-height: 0; display: grid; grid-template-columns: 150px 1fr 301px; column-gap: 4px; }
    .tools { border-right: 1px solid #fff; border-bottom: 1px solid #fff; padding-top: 1px; }
    .tools h3 { margin: 0 1px 2px 0; height: 22px; font: inherit; line-height: 20px; padding-left: 3px; border: 1px solid #a0a0a0; border-left: 0; }
    .tools button { width: 100%; justify-content: flex-start; height: 22px; gap: 6px; padding-left: 4px; }
    .tools button span { padding-top: 3px; }
    .design { border: 1px solid #696969; display: flex; flex-direction: column; min-width: 0; min-height: 0; }
    .hruler { display: grid; grid-template-columns: 22px 1fr; height: 22px; flex: none; }
    .corner { width: 18px; height: 18px; border: 1px solid #d0d0d0; margin: 2px; }
    .hr { display: flex; height: 13px; margin: 5px 0 0 16px; background: #fff; width: 721px; padding-left: 6px; align-items: center; overflow: hidden; }
    .t { flex: none; display: flex; align-items: center; justify-content: center; font: 10px/12px "Noto Sans", sans-serif; }
    .hr .t { width: 12px; }
    .vrl .t { height: 12px; }
    .t i { background: #000; width: 1px; height: 4px; }
    .t i.h { height: 6px; }
    .vrl .t i { width: 3px; height: 1px; } .vrl .t i.h { width: 6px; }
    .mid { flex: 1; min-height: 0; display: grid; grid-template-columns: 22px 1fr 18px; }
    .vside { display: flex; flex-direction: column; padding: 16px 4px 0; min-height: 0; overflow: hidden; margin-bottom: -17px; z-index: 1; }
    .knob { height: 19px; border: 1px solid #b8b8b8; border-width: 0 1px 1px 0; flex: none; display: flex; align-items: center; justify-content: center; }
    .vrl { background: #fff; flex: 1; min-height: 0; overflow: hidden; padding-top: 6px; }
    .canvas { background: #adb0b5; padding: 16px 13px 0 16px; overflow: hidden; min-height: 0; min-width: 0; }
    .page { width: 721px; border: 1px solid #000; border-bottom: 0; }
    .detail { height: 18px; background: #f0f0f0; display: flex; align-items: center; gap: 6px; padding-left: 3px; }
    .bottom { display: grid; grid-template-columns: 22px 1fr 17px 1px; height: 17px; flex: none; }
    .bottom .end { background: #adb0b5; }
    .modes { height: 27px; flex: none; display: flex; align-items: center; padding: 0 0 2px 2px; }
    .modes button { height: 22px; }
    .modes .on { border: 1px solid #0078d7; background: #c2d5f0; }
    .modes .des { width: 72px; gap: 6px; }
    .modes .bar { width: 1px; height: 12px; background: #999; margin: 0 5px 0 4px; }
    .modes .scr { gap: 13px; width: 60px; margin-right: 93px; }
    .sq { display: flex; gap: 1px; }
    .sq button { width: 22px; border: 1px solid #aaa; background: #e4e4e4; }
    .zoom { display: flex; align-items: center; margin-left: auto; padding-right: 5px; gap: 3px; }
    .sq-all { display: flex; gap: 4px; }
    .side { display: flex; flex-direction: column; min-width: 0; min-height: 0; }
    .tree { height: 269px; border: 1px solid #828790; background: #fff; display: flex; padding: 1px 1px 1px 0; flex: none; }
    .tree ul { list-style: none; margin: 0; padding: 0; flex: 1; overflow: hidden; }
    .tree li { height: 16px; display: flex; align-items: center; padding-left: 12px; gap: 4px; }
    .ptools { height: 31px; flex: none; display: flex; align-items: center; padding-left: 2px; gap: 1px; }
    .ptools button { width: 23px; height: 21px; }
    .ptools .on { background: #cce4f7; border: 1px solid #99c9ef; }
    .ptools .vr { height: 20px; width: 7px; }
    .props { flex: 1; min-height: 0; border: 1px solid #828790; background: #fff; display: flex; overflow: hidden; padding: 1px 1px 0 0; }
    .props > div:first-child { flex: 1; overflow: hidden; }
    .props td, .props th { height: 16px; line-height: 15px; border-bottom: 1px solid #f0f3f9; }
    .props td:nth-child(2) { border-right: 1px solid #f0f3f9; padding-left: 3px; }
    .props td:nth-child(3) { padding-left: 3px; }
    .props .gut { background: #f4f7fc; border-color: #f4f7fc; }
    .props .cat { background: #f4f7fc; font-weight: 700; padding-left: 3px; }
    .props b { font-weight: 700; }
    .props .gut svg { margin-left: 5px; }
    .link { height: 27px; border: 1px solid #a0a0a0; margin-top: 4px; padding: 3px 5px; flex: none; }
    .link a { color: #0000ee; }
    .desc { height: 58px; border: 1px solid #a0a0a0; margin-top: 3px; padding: 2px 4px; line-height: 13px; flex: none; }
    .desc b { display: block; font-size: 12px; line-height: 15px; }
    footer { height: 50px; flex: none; display: flex; align-items: center; padding: 2px 13px 0 12px; gap: 5px; }
    footer button { width: 95px; height: 32px; background: #3b69c6; border: 2px solid #000; color: #fff; font: 700 13px/16px "Noto Sans", sans-serif; }
    footer .hot { outline: 3px solid #f00; outline-offset: -1px; }
    footer .ok { margin-left: auto; }
  `];
  private btn(label: string, body: Tpl) {
    return html`<button aria-label=${label} title=${label}>${icon(body)}</button>`;
  }
  private ticks(n: number) {
    return Array.from({ length: n }, (_, k) => {
      const i = k + 1;
      return html`<span class="t">${i % 8 === 0 ? i / 8 : html`<i class=${i % 4 === 0 ? "h" : ""}></i>`}</span>`;
    });
  }
  private combo(cls: string, label: string, v: string) {
    return html`<span class="combo"><select class=${cls} aria-label=${label}><option>${v}</option></select>${icon(svg`<path d="M0 1h5L2.500 4z" fill="#000"/>`, 5, 5)}</span>`;
  }
  render() {
    const vr = html`<span class="vr"></span>`;
    const grip = html`<span class="grip"></span>`;
    const field = svg`<path d="M4.500 2.500h11v6h-11z" fill="#e6f0fa" stroke="#3a73b0" stroke-width="1.500"/><path d="M.8 5.800h11v6H.8z" fill="#fff" stroke="#1f5c9e" stroke-width="1.500"/><path d="M3 9.500h3M7 9.500h3" stroke="#888"/>`;
    return html`
      <header>${icon(svg`<path d="M3.500 2.500h8l3 3v9h-11z" fill="#dfe9fa" stroke="#4a6da8"/><path d="M11.500 2.500v3h3M6 7.500h6M6 9.500h6M6 11.500h6" stroke="#8aa7d6" fill="none"/><circle cx="4" cy="4" r="3" fill="#f7a11a" stroke="#e0621c" stroke-width=".8"/><circle cx="4" cy="4" r="1.200" fill="#fff2a0"/>`)}
        <span>Report Layout Designer*</span>
        <button aria-label="Minimize">${icon(svg`<path d="M0 5.500h10" stroke="#000"/>`, 10, 11)}</button>
        <button aria-label="Maximize">${icon(svg`<rect x=".5" y=".5" width="9" height="9" fill="none" stroke="#000"/>`, 10, 10)}</button>
        <button aria-label="Close">${icon(svg`<path d="M0 0l10 10M10 0L0 10" stroke="#000"/>`, 10, 10)}</button>
      </header>
      <div class="bars">
        <div class="strip">${grip}${this.btn("Cut", TB.cut)}${this.btn("Copy", TB.copy)}${this.btn("Paste", TB.paste)}${this.btn("Delete", TB.del)}<span class="edge"></span>
          ${grip}${this.btn("Undo", TB.undo)}${this.btn("Redo", TB.redo)}<span class="edge"></span>
          ${grip}${this.btn("Align to grid", TB.snap)}${vr}${this.btn("Align left", TB.left)}${this.btn("Align center", TB.center)}${this.btn("Align right", TB.right)}${vr}
          ${this.btn("Align top", TB.top)}${this.btn("Align middle", TB.middle)}${this.btn("Align bottom", TB.bottom)}${vr}
          ${this.btn("Same width", TB.width)}${this.btn("Same height", TB.height)}${this.btn("Same size", TB.both)}${this.btn("Size to grid", TB.sizeGrid)}
          ${this.btn("Equal horizontal spacing", TB.h1)}${this.btn("Increase horizontal spacing", TB.h2)}${this.btn("Decrease horizontal spacing", TB.h3)}${this.btn("Remove horizontal spacing", TB.h4)}
          ${this.btn("Equal vertical spacing", TB.v1)}${this.btn("Increase vertical spacing", TB.v2)}${this.btn("Decrease vertical spacing", TB.v3)}${this.btn("Remove vertical spacing", TB.v4)}${vr}
          ${this.btn("Bring to front", TB.front)}${this.btn("Send to back", TB.back)}</div>
        <div class="strip">${grip}<span class="combos">${this.combo("w1", "Style", "Normal")}${this.combo("w2", "Font", "Arial")}${this.combo("w3", "Size", "8.25")}</span>${vr}
          <button class="biu">B</button><button class="biu i">I</button><button class="biu u">U</button>${vr}
          ${this.btn("Text color", TB.fore)}${this.btn("Highlight", TB.mark)}
          <button class="on" aria-label="Left">${lines([13, 9, 13, 9, 13, 10], "l")}</button>
          <button aria-label="Center">${lines([14, 8, 14, 8, 14, 8], "c")}</button>
          <button aria-label="Right">${lines([13, 9, 13, 9, 13, 9], "r")}</button>
          <button aria-label="Justify">${lines([14, 14, 14, 14, 14, 14], "l")}</button>${vr}
          ${this.btn("Bullets", TB.bullets)}${this.btn("Indent", TB.indent)}${this.btn("Outdent", TB.outdent)}</div>
      </div>
      <div class="main">
        <div class="tools"><h3>Section Reports</h3>${TOOLS.map(([n, g]) => html`<button>${icon(g)}<span>${n}</span></button>`)}</div>
        <div class="design">
          <div class="hruler"><span class="corner"></span><div class="hr">${this.ticks(60)}</div></div>
          <div class="mid">
            <div class="vside"><span class="knob">${icon(svg`<path d="M0 1.500h9M0 4.500h9" stroke="#555"/>`, 9, 6)}</span><div class="vrl">${this.ticks(60)}</div></div>
            <div class="canvas"><div class="page">
              <div class="detail">${icon(svg`<rect x=".5" y=".5" width="10" height="10" fill="none" stroke="#666"/><path d="M2 5.500h7" stroke="#333"/>`, 11, 11)}Detail</div>
              <report-card></report-card>
            </div></div>
            ${scrollbar("v", 0, 380, 224)}
          </div>
          <div class="bottom"><span></span>${scrollbar("h", 0, 713, 0)}<span class="end"></span><span></span></div>
          <div class="modes">
            <button class="on des">${icon(svg`<path d="M2 14l2-5 7-7 3 3-7 7z" fill="#f4a321" stroke="#a8641a" stroke-width=".7"/><path d="M11 2l3 3 1-2-2-2z" fill="#d8402a"/><path d="M2 14l1-3 2 2z" fill="#333"/>`)}Designer</button>
            <span class="bar"></span>
            <button class="scr">${icon(svg`<path d="M6 3L1 8l5 5M10 3l5 5-5 5" fill="none" stroke="#777" stroke-width="1.300"/>`)}Script</button>
            <div class="sq-all">
              <div class="sq"><button aria-label="Rulers">${icon(svg`<path d="M1 1h14v5H6v9H1z" fill="#eee" stroke="#446"/><path d="M5 1v3M8 1v3M11 1v3M1 7h3M1 10h3" stroke="#446"/>`)}</button></div>
              <div class="sq"><button aria-label="No grid">${icon(svg`<rect x="2.500" y="2.500" width="11" height="11" fill="none" stroke="#000"/>`)}</button><button aria-label="Dots">${icon(svg`<rect x="2.500" y="2.500" width="11" height="11" fill="none" stroke="#000"/><path d="M5 5.500h8M5 8.500h8M5 11.500h8" stroke="#000" stroke-dasharray="1 2"/>`)}</button><button class="on" aria-label="Lines">${icon(svg`<path d="M2 2.500h12M2 5.500h12M2 8.500h12M2 11.500h12M2 13.500h12M2.500 2v12M5.500 2v12M8.500 2v12M11.500 2v12M13.500 2v12" stroke="#345"/>`)}</button></div>
              <div class="sq"><button class="on" aria-label="Snap lines">${icon(svg`<circle cx="3" cy="3" r="2" fill="#2a5fb0"/><path d="M5 3.500h11M3.500 5v11" stroke="#2a5fb0" stroke-dasharray="1 1"/>`)}</button><button aria-label="Snap to grid">${icon(svg`<path d="M4 1v14M12 1v14M1 4h14M1 12h14" stroke="#5a86c8"/><rect x="5" y="5" width="6" height="6" fill="#fff" stroke="#333"/>`)}</button></div>
              <div class="sq"><button class="on" aria-label="Select">${icon(svg`<path d="M5 1v12l3-3 2 5 2-1-2-5h4z" fill="#fff" stroke="#223"/>`)}</button><button aria-label="Pan">${icon(svg`<path d="M5 15l-4-6 1-1 3 2-1-6 1-1 2 5V2l1.500-1L10 7l1-5 1.500 0-.5 6 1.500-3 1 1-1.500 5-2 4z" fill="#fff" stroke="#111"/>`)}</button></div>
            </div>
            <div class="zoom"><span>100%</span>
              <svg width="140" height="18" viewBox="0 0 140 18" role="img" aria-label="Zoom">
                <path d="M14 9h112" stroke="#999" stroke-width="2"/>
                <circle cx="8" cy="9" r="7" fill="#ddd" stroke="#999"/><path d="M4.500 9h7" stroke="#444" stroke-width="1.500"/>
                <circle cx="132" cy="9" r="7" fill="#ddd" stroke="#999"/><path d="M128.500 9h7M132 5.500v7" stroke="#444" stroke-width="1.500"/>
                <path d="M49.500 1.500h9v11l-4.500 4-4.500-4z" fill="#ddd" stroke="#999"/>
              </svg></div>
          </div>
        </div>
        <div class="side">
          <div class="tree"><ul>${TREE.map((n) => html`<li>${icon(svg`<path d="M.5 0v16M19.500 0v16M38.500 0v16M40 8.500h9" stroke="#888" stroke-dasharray="1 1"/><g transform="translate(49 1)">${field}</g>`, 65, 16)}${n}</li>`)}</ul>${scrollbar("v", 199, 17, 16)}</div>
          <div class="ptools"><button class="on" aria-label="Categorized">${icon(svg`<rect x=".5" y="1.500" width="5" height="5" fill="#fff" stroke="#456"/><rect x=".5" y="10.500" width="5" height="5" fill="#fff" stroke="#456"/><path d="M2 4h2M3 3v2M2 13h2M3 12v2" stroke="#000"/><path d="M8 3.500h3M12 3.500h4M8 6.500h3M12 6.500h4M8 9.500h3M12 9.500h4M8 12.500h3M12 12.500h4M8 15.500h8" stroke="#5a7fb5"/>`)}</button>
            <button aria-label="Alphabetical">${icon(svg`<text x="0" y="8" font-family="Liberation Sans" font-size="9" font-weight="700" fill="#2a4fa0">A</text><text x="1" y="16" font-family="Liberation Sans" font-size="9" font-weight="700" fill="#a02a2a">Z</text><path d="M12.500 1v12M10 11l2.500 4 2.500-4z" stroke="#000" fill="#000"/>`)}</button>
            ${vr}<button aria-label="Property pages">${icon(svg`<rect x=".5" y="1.500" width="15" height="13" fill="#ddd" stroke="#aaa"/><path d="M1 4h14" stroke="#bbb"/><path d="M3 8h2M7 8h6M3 11h2M7 11h6" stroke="#999"/>`)}</button></div>
          <div class="props"><div><table><colgroup><col style="width:21px"><col style="width:121px"><col></colgroup>
            ${PROPS.map(([n, v, b]) => v === undefined
              ? html`<tr><td class="gut">${chev("down")}</td><th class="cat" colspan="2">${n}</th></tr>`
              : html`<tr><td class="gut"></td><td>${n}</td><td>${b ? html`<b>${v}</b>` : v}</td></tr>`)}
          </table></div>${scrollbar("v", 72, 126, 80)}</div>
          <div class="link"><a href="#">Property dialog...</a></div>
          <div class="desc"><b>Text</b>Gets or sets the formatted text value to be rendered in the control.</div>
        </div>
      </div>
      <footer><button>Defaults</button><button class="hot">Preview</button><button>Import</button><button>Export</button><button class="ok hot">Ok</button><button>Cancel</button></footer>`;
  }
}

/* ---------- Desktop ---------- */
@customElement("app-root")
export class AppRoot extends LitElement {
  static styles = [base, css`
    :host { display: block; position: relative; height: 100vh; overflow: hidden; background: #eef2f6; font: 13px/16px "Open Sans", "Noto Sans", sans-serif; color: #222; }
    .back { height: 100%; display: flex; flex-direction: column; }
    .menu { margin-top: 5px; border-top: 1px solid #dfe3e8; background: #f7f8f9; height: 60px; display: flex; padding: 25px 0 0 870px; gap: 24px; white-space: nowrap; overflow: hidden; }
    .menu .when { margin-left: auto; width: 116px; padding-top: 2px; font-size: 12px; }
    .rows { flex: 1; display: grid; grid-template-columns: 98px 33px 1fr; }
    .rows .nav { border-right: 2px solid #dcdfe2; }
    .rows .gutter { background: #f8fafb; border-left: 10px solid #eef2f6; }
    .rows .grid { background: repeating-linear-gradient(#fdfdfd 0 24px, #dedede 24px 25px); border-left: 1px solid #dedede; margin-top: 20px; }
    inspection-window { position: absolute; left: 0; top: 5px; width: 896px; height: 799px; }
    designer-window { position: absolute; left: 242px; right: 0; top: 45px; bottom: 0; }
    .marks { position: absolute; inset: 0; pointer-events: none; }
  `];
  private arrow(x1: number, y1: number, x2: number, y2: number) {
    const a = (Math.atan2(y2 - y1, x2 - x1) * 180) / Math.PI;
    const len = Math.hypot(x2 - x1, y2 - y1);
    return svg`<g transform="translate(${x1} ${y1}) rotate(${a})"><path d="M0 0H${len - 12}" stroke="#f00" stroke-width="3"/><path d="M${len} 0l-18 -6 4 6 -4 6z" fill="#f00"/></g>`;
  }
  render() {
    const rects = [[4, 755, 104, 39], [242, 169, 85, 25], [638, 403, 76, 22], [716, 402, 88, 22], [1240, 330, 138, 22]];
    const handles = [[715, 403], [760, 403], [804, 403], [804, 416], [804, 428], [760, 428], [715, 428]];
    return html`
      <div class="back"><div class="menu"><span>Analytics</span><span>Workplan Activity</span><span class="when">June 01, 2025 - June 15</span></div>
        <div class="rows"><div class="nav"></div><div class="gutter"></div><div class="grid"></div></div></div>
      <inspection-window></inspection-window>
      <designer-window></designer-window>
      <svg class="marks" width="1496" height="881" viewBox="0 0 1496 881" aria-hidden="true">
        <path d="M715.500 403v25.500H804.500V403" fill="none" stroke="#000" stroke-dasharray="1 1"/>
        ${handles.map(([x, y]) => svg`<rect x=${x - 2.5} y=${y - 2.5} width="5" height="5" fill="#fff" stroke="#000"/>`)}
        ${rects.map(([x, y, w, h]) => svg`<rect x=${x + 1.5} y=${y + 1.5} width=${w - 3} height=${h - 3} fill="none" stroke="#f00" stroke-width="3"/>`)}
        <rect x="728.500" y="395.500" width="14" height="14" rx="2" fill="#e8effb" fill-opacity=".8" stroke="#8a9ec4"/>
        <path d="M735.500 397v11M730 402.500h11M733.500 399l2-2 2 2M733.500 406l2 2 2-2M732 400.500l-2 2 2 2M739 400.500l2 2-2 2" fill="none" stroke="#223"/>
        ${this.arrow(326, 193, 636, 403)}${this.arrow(1240, 340, 807, 408)}${this.arrow(108, 775, 243, 749)}
      </svg>`;
  }
}
